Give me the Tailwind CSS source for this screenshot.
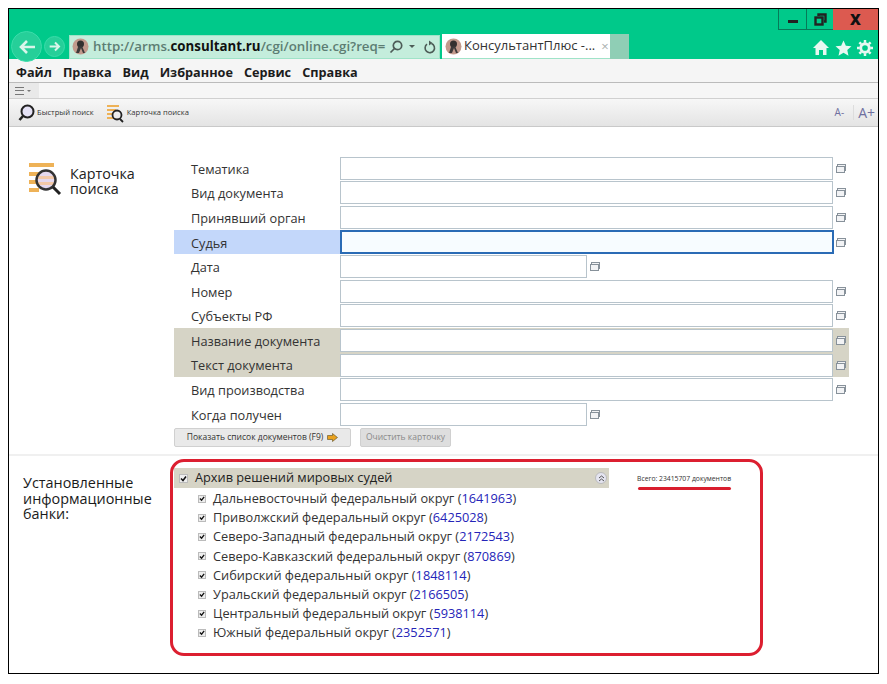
<!DOCTYPE html>
<html lang="ru">
<head>
  <meta charset="UTF-8">
  <title>КонсультантПлюс</title>
  <script src="https://cdn.jsdelivr.net/npm/@tailwindcss/browser@4"></script>
</head>
<body class="bg-white overflow-hidden font-['Open_Sans','Noto_Sans',sans-serif] text-[#222]">
  <div class="relative ml-[8px] mt-[8px] w-[871px] h-[666px] border border-black flex flex-col">

    <!-- title bar -->
    <div class="relative h-[50px] bg-[#00c98a] shrink-0">
      <div class="absolute right-0 top-0 flex h-[21px]">
        <div class="w-[28px] border-l border-b border-[#067a58] flex items-center justify-center"><div class="w-[10px] h-[3px] bg-[#222] mt-[4px]"></div></div>
        <div class="w-[27px] border-l border-b border-[#067a58] flex items-center justify-center">
          <svg width="13" height="13" viewBox="0 0 13 13" fill="none" stroke="#222" stroke-width="2.400"><rect x="1.500" y="4.500" width="7" height="7"/><path d="M4.500 3V1.500h7v7H10"/></svg>
        </div>
        <div class="w-[45px] bg-[#dc5a50] flex items-center justify-center text-[15px] font-extrabold text-[#111] leading-none">X</div>
      </div>
      <div class="absolute left-0 top-[25px] h-[25px] flex items-center pl-[2px]">
        <div class="w-[31px] h-[31px] rounded-full border border-[#3bdcaa] bg-[#26cf99] flex items-center justify-center">
          <svg width="18" height="16" viewBox="0 0 18 16" fill="none" stroke="#d9f5ea" stroke-width="2.600"><path d="M17 8H3M9 2 3 8l6 6"/></svg>
        </div>
        <div class="ml-[2px] w-[21px] h-[21px] rounded-full border border-[#3bdcaa] bg-[#26cf99] flex items-center justify-center">
          <svg width="12" height="11" viewBox="0 0 18 16" fill="none" stroke="#d9f5ea" stroke-width="3"><path d="M1 8h14M9 2l6 6-6 6"/></svg>
        </div>
        <div class="w-[371px] h-[24px] bg-[#c4eddc] flex items-center ml-[4px] pl-[2px] border border-[#9fe3c8]">
          <svg class="shrink-0" width="17" height="17" viewBox="0 0 17 17"><circle cx="8.500" cy="8.500" r="8" fill="#c29a8c"/><circle cx="8.500" cy="6" r="3.500" fill="#33302f"/><path d="M6 9l-2 6h3l2-5 2 5h2L10 8z" fill="#3c3a3a"/></svg>
          <span class="ml-[4px] w-[296px] overflow-hidden text-[13.300px] font-semibold text-[#5d7d73] whitespace-nowrap">http://arms.<b class="font-bold text-[#111]">consultant.ru</b>/cgi/online.cgi?req=</span>
          <svg class="ml-auto shrink-0" width="14" height="14" viewBox="0 0 14 14" fill="none" stroke="#4d5c57" stroke-width="1.700"><circle cx="8.500" cy="5.500" r="4.200"/><path d="M5.500 8.500 1.500 12.500"/></svg>
          <div class="ml-[6px] w-0 h-0 border-x-[3px] border-x-transparent border-t-[3px] border-t-[#4d5c57]"></div>
          <svg class="ml-[8px] mr-[3px] shrink-0" width="13" height="14" viewBox="0 0 13 14" fill="none" stroke="#4d5c57" stroke-width="1.600"><path d="M4 4.200a4.700 4.700 0 1 0 4.500-.6"/><path d="M6 0.500v5l3.500-2.500z" fill="#4d5c57" stroke="none"/></svg>
        </div>
        <div class="w-[168px] h-[25px] bg-white ml-[2px] flex items-center pl-[3px] border-b border-[#9fe3c8]">
          <svg class="shrink-0" width="17" height="17" viewBox="0 0 17 17"><circle cx="8.500" cy="8.500" r="8" fill="#c29a8c"/><circle cx="8.500" cy="6" r="3.500" fill="#33302f"/><path d="M6 9l-2 6h3l2-5 2 5h2L10 8z" fill="#3c3a3a"/></svg>
          <span class="ml-[2px] text-[13px] text-[#333] whitespace-nowrap">КонсультантПлюс -...</span>
          <span class="ml-[6px] text-[13px] leading-none text-[#a9b0ae]">×</span>
        </div>
        <div class="w-[19px] h-[25px] bg-[#8fceb5]"></div>
      </div>
      <div class="absolute right-[5px] top-[30px] flex items-center gap-[5px]">
        <svg width="18" height="17" viewBox="0 0 18 17" fill="#e8f8f2"><path d="M9 1 1 9h2.500v7H7v-5h4v5h3.500V9H17z"/></svg>
        <svg width="17" height="16" viewBox="0 0 18 17" fill="#e8f8f2"><path d="m9 .5 2.500 5.600 6 .6-4.500 4 1.300 6L9 13.600 3.700 16.700l1.300-6-4.500-4 6-.6z"/></svg>
        <svg width="16" height="16" viewBox="0 0 17 17" fill="none" stroke="#e8f8f2"><circle cx="8.500" cy="8.500" r="4.500" stroke-width="3"/><path d="M8.500 0v3M8.500 14v3M0 8.500h3M14 8.500h3M2.500 2.500l2 2M12.500 12.500l2 2M14.500 2.500l-2 2M4.500 12.500l-2 2" stroke-width="2.600"/></svg>
      </div>
    </div>

    <!-- menu bar -->
    <div class="h-[24px] pt-[4px] bg-[#f5f5f5] border-b border-[#bbb] shrink-0 flex items-center pl-[7px] gap-[11px] text-[12.700px] font-bold text-[#1c1c1c]">
      <span>Файл</span><span>Правка</span><span>Вид</span><span>Избранное</span><span>Сервис</span><span>Справка</span>
    </div>

    <!-- collapsed toolbar -->
    <div class="h-[16px] bg-[#f6f6f6] border-b border-[#d0d0d0] shrink-0 flex">
      <div class="w-[30px] bg-[#e9e9e9] flex items-center pl-[6px] gap-[3px]">
        <div class="w-[9px] h-[8px] border-y border-[#777] flex items-center"><div class="w-full h-px bg-[#777]"></div></div>
        <div class="w-0 h-0 border-x-[2px] border-x-transparent border-t-[2px] border-t-[#777]"></div>
      </div>
    </div>

    <!-- tools -->
    <div class="h-[28px] bg-gradient-to-b from-[#f7f7f7] to-[#e4e4e4] border-b border-[#c9c9c9] shrink-0 flex items-center pl-[9px] text-[7.600px] text-[#333]">
      <svg width="17" height="18" viewBox="0 0 17 18" fill="#e5e2f5" stroke="#222" stroke-width="2"><circle cx="9.500" cy="7.500" r="6"/><path d="M5 12 1.500 16" stroke-width="2.600"/></svg>
      <span class="ml-[2px]">Быстрый поиск</span>
      <svg class="ml-[12px]" width="20" height="20" viewBox="0 0 20 20"><path d="M1 2h12v2H1zM1 6h9v2H1zM1 10h6v2H1zM1 14h7v2H1z" fill="#eeb257"/><circle cx="11" cy="12" r="4.500" fill="none" stroke="#222" stroke-width="1.800"/><path d="m14 16 3 3" stroke="#222" stroke-width="1.800"/></svg>
      <span class="ml-[1px]">Карточка поиска</span>
      <div class="ml-auto flex items-center pr-[3px] text-[#6f6f9f]">
        <span class="text-[10px] pr-[9px] border-r border-[#ddd]">A-</span>
        <span class="text-[14px] pl-[4px]">A+</span>
      </div>
    </div>

    <!-- search card -->
    <div class="h-[329px] shrink-0 flex border-b-2 border-[#f0f0f0]">
      <div class="w-[165px] pl-[20px] pt-[36px] flex items-start shrink-0">
        <svg class="shrink-0" width="34" height="34" viewBox="0 0 34 34"><path d="M0 0h25v4H0zM0 9h10v4H0zM0 17h8v4H0zM0 25h10v4H0z" fill="#eeb257"/><circle cx="17" cy="17" r="9.500" fill="#e5d9ef"/><path d="M9 13h16v3H9zM9 19h16v3H9z" fill="#f3c9a8"/><circle cx="17" cy="17" r="9.500" fill="none" stroke="#333" stroke-width="2.500"/><path d="m24 24 7 7" stroke="#222" stroke-width="3"/></svg>
        <div class="ml-[7px] text-[14.300px] leading-[15px] mt-[3px] text-[#222]">Карточка<br>поиска</div>
      </div>

      <div class="w-[690px] pt-[29px] shrink-0 text-[12.750px] text-[#333]">
        <div class="h-[24.600px] flex items-center"><span class="w-[166px] pl-[17px] pt-[2px]">Тематика</span><div class="w-[493px] h-[23px] border border-[#b8c4cc] bg-white"></div><svg class="ml-[3px]" width="10" height="9" viewBox="0 0 10 9" fill="#f2f3f5" stroke="#87919a"><rect x="1.500" y=".5" width="8" height="6"/><rect x=".5" y="2.500" width="8" height="6"/></svg></div>
        <div class="h-[24.600px] flex items-center"><span class="w-[166px] pl-[17px] pt-[2px]">Вид документа</span><div class="w-[493px] h-[23px] border border-[#b8c4cc] bg-white"></div><svg class="ml-[3px]" width="10" height="9" viewBox="0 0 10 9" fill="#f2f3f5" stroke="#87919a"><rect x="1.500" y=".5" width="8" height="6"/><rect x=".5" y="2.500" width="8" height="6"/></svg></div>
        <div class="h-[24.600px] flex items-center"><span class="w-[166px] pl-[17px] pt-[2px]">Принявший орган</span><div class="w-[493px] h-[23px] border border-[#b8c4cc] bg-white"></div><svg class="ml-[3px]" width="10" height="9" viewBox="0 0 10 9" fill="#f2f3f5" stroke="#87919a"><rect x="1.500" y=".5" width="8" height="6"/><rect x=".5" y="2.500" width="8" height="6"/></svg></div>
        <div class="h-[24.600px] flex items-center"><span class="w-[166px] h-full flex items-center pl-[17px] pt-[2px] bg-[#c3d7fa]">Судья</span><div class="w-[494px] h-[24px] border-2 border-[#2a6bb5] bg-[#f7fcff]"></div><svg class="ml-[2px]" width="10" height="9" viewBox="0 0 10 9" fill="#f2f3f5" stroke="#87919a"><rect x="1.500" y=".5" width="8" height="6"/><rect x=".5" y="2.500" width="8" height="6"/></svg></div>
        <div class="h-[24.600px] flex items-center"><span class="w-[166px] pl-[17px] pt-[2px]">Дата</span><div class="w-[247px] h-[23px] border border-[#b8c4cc] bg-white"></div><svg class="ml-[3px]" width="10" height="9" viewBox="0 0 10 9" fill="#f2f3f5" stroke="#87919a"><rect x="1.500" y=".5" width="8" height="6"/><rect x=".5" y="2.500" width="8" height="6"/></svg></div>
        <div class="h-[24.600px] flex items-center"><span class="w-[166px] pl-[17px] pt-[2px]">Номер</span><div class="w-[493px] h-[23px] border border-[#b8c4cc] bg-white"></div><svg class="ml-[3px]" width="10" height="9" viewBox="0 0 10 9" fill="#f2f3f5" stroke="#87919a"><rect x="1.500" y=".5" width="8" height="6"/><rect x=".5" y="2.500" width="8" height="6"/></svg></div>
        <div class="h-[24.600px] flex items-center"><span class="w-[166px] pl-[17px] pt-[2px]">Субъекты РФ</span><div class="w-[493px] h-[23px] border border-[#b8c4cc] bg-white"></div><svg class="ml-[3px]" width="10" height="9" viewBox="0 0 10 9" fill="#f2f3f5" stroke="#87919a"><rect x="1.500" y=".5" width="8" height="6"/><rect x=".5" y="2.500" width="8" height="6"/></svg></div>
        <div class="bg-[#d6d4c6] w-[675px]">
          <div class="h-[24.600px] flex items-center"><span class="w-[166px] pl-[17px] pt-[2px]">Название документа</span><div class="w-[493px] h-[23px] border border-[#b8c4cc] bg-white"></div><svg class="ml-[3px]" width="10" height="9" viewBox="0 0 10 9" fill="#f2f3f5" stroke="#87919a"><rect x="1.500" y=".5" width="8" height="6"/><rect x=".5" y="2.500" width="8" height="6"/></svg></div>
          <div class="h-[24.600px] flex items-center"><span class="w-[166px] pl-[17px] pt-[2px]">Текст документа</span><div class="w-[493px] h-[23px] border border-[#b8c4cc] bg-white"></div><svg class="ml-[3px]" width="10" height="9" viewBox="0 0 10 9" fill="#f2f3f5" stroke="#87919a"><rect x="1.500" y=".5" width="8" height="6"/><rect x=".5" y="2.500" width="8" height="6"/></svg></div>
        </div>
        <div class="h-[24.600px] flex items-center"><span class="w-[166px] pl-[17px] pt-[2px]">Вид производства</span><div class="w-[493px] h-[23px] border border-[#b8c4cc] bg-white"></div><svg class="ml-[3px]" width="10" height="9" viewBox="0 0 10 9" fill="#f2f3f5" stroke="#87919a"><rect x="1.500" y=".5" width="8" height="6"/><rect x=".5" y="2.500" width="8" height="6"/></svg></div>
        <div class="h-[24.600px] flex items-center"><span class="w-[166px] pl-[17px] pt-[2px]">Когда получен</span><div class="w-[247px] h-[23px] border border-[#b8c4cc] bg-white"></div><svg class="ml-[3px]" width="10" height="9" viewBox="0 0 10 9" fill="#f2f3f5" stroke="#87919a"><rect x="1.500" y=".5" width="8" height="6"/><rect x=".5" y="2.500" width="8" height="6"/></svg></div>
        <div class="flex gap-[9px] text-[8.500px] mt-[1px]">
          <div class="w-[177px] h-[19px] bg-[#e9e9e9] border border-[#d0d0d0] rounded-[2px] flex items-center justify-center text-[#333]">Показать список документов (F9)
            <svg class="ml-[4px]" width="11" height="9" viewBox="0 0 11 9" fill="#e9a21f" stroke="#5a4a20" stroke-width=".6"><path d="M.5 2.500h5V.5l5 4-5 4v-2h-5z"/></svg>
          </div>
          <div class="w-[91px] h-[19px] bg-[#dedede] border border-[#d0d0d0] rounded-[2px] flex items-center justify-center text-[#8a8a8a]">Очистить карточку</div>
        </div>
      </div>
    </div>

    <!-- information banks -->
    <div class="relative flex-1 flex">
      <div class="w-[165px] pl-[14px] pt-[19px] text-[14.400px] leading-[15.500px] text-[#1a1a1a] shrink-0">Установленные<br>информационные<br>банки:</div>
      <div class="w-[435px] pt-[12px] text-[12.750px] text-[#333]">
        <div class="h-[20px] bg-[#d6d4c6] flex items-center pl-[5px]">
          <span class="w-[9px] h-[9px] bg-[#eee] border border-[#bbb] flex items-center justify-center shrink-0"><svg width="7" height="7" viewBox="0 0 7 7" fill="none" stroke="#111" stroke-width="1.500"><path d="m1 3.500 2 2 3-4"/></svg></span>
          <span class="ml-[7px] text-[#222]">Архив решений мировых судей</span>
          <span class="ml-auto mr-[2px] w-[12px] h-[12px] rounded-full bg-[#e4e4f0] border border-[#bbb] flex items-center justify-center"><svg width="7" height="7" viewBox="0 0 7 7" fill="none" stroke="#555"><path d="m1 3 2.500-2L6 3M1 6l2.500-2L6 6"/></svg></span>
        </div>
        <div class="pl-[24px] pt-[1px]">
          <div class="h-[19.200px] flex items-center"><span class="w-[8px] h-[8px] bg-[#eee] border border-[#bbb] flex items-center justify-center shrink-0"><svg width="7" height="7" viewBox="0 0 7 7" fill="none" stroke="#111" stroke-width="1.500"><path d="m1 3.500 2 2 3-4"/></svg></span><span class="ml-[7px]">Дальневосточный федеральный округ (<span class="text-[#2424b8]">1641963</span>)</span></div>
          <div class="h-[19.200px] flex items-center"><span class="w-[8px] h-[8px] bg-[#eee] border border-[#bbb] flex items-center justify-center shrink-0"><svg width="7" height="7" viewBox="0 0 7 7" fill="none" stroke="#111" stroke-width="1.500"><path d="m1 3.500 2 2 3-4"/></svg></span><span class="ml-[7px]">Приволжский федеральный округ (<span class="text-[#2424b8]">6425028</span>)</span></div>
          <div class="h-[19.200px] flex items-center"><span class="w-[8px] h-[8px] bg-[#eee] border border-[#bbb] flex items-center justify-center shrink-0"><svg width="7" height="7" viewBox="0 0 7 7" fill="none" stroke="#111" stroke-width="1.500"><path d="m1 3.500 2 2 3-4"/></svg></span><span class="ml-[7px]">Северо-Западный федеральный округ (<span class="text-[#2424b8]">2172543</span>)</span></div>
          <div class="h-[19.200px] flex items-center"><span class="w-[8px] h-[8px] bg-[#eee] border border-[#bbb] flex items-center justify-center shrink-0"><svg width="7" height="7" viewBox="0 0 7 7" fill="none" stroke="#111" stroke-width="1.500"><path d="m1 3.500 2 2 3-4"/></svg></span><span class="ml-[7px]">Северо-Кавказский федеральный округ (<span class="text-[#2424b8]">870869</span>)</span></div>
          <div class="h-[19.200px] flex items-center"><span class="w-[8px] h-[8px] bg-[#eee] border border-[#bbb] flex items-center justify-center shrink-0"><svg width="7" height="7" viewBox="0 0 7 7" fill="none" stroke="#111" stroke-width="1.500"><path d="m1 3.500 2 2 3-4"/></svg></span><span class="ml-[7px]">Сибирский федеральный округ (<span class="text-[#2424b8]">1848114</span>)</span></div>
          <div class="h-[19.200px] flex items-center"><span class="w-[8px] h-[8px] bg-[#eee] border border-[#bbb] flex items-center justify-center shrink-0"><svg width="7" height="7" viewBox="0 0 7 7" fill="none" stroke="#111" stroke-width="1.500"><path d="m1 3.500 2 2 3-4"/></svg></span><span class="ml-[7px]">Уральский федеральный округ (<span class="text-[#2424b8]">2166505</span>)</span></div>
          <div class="h-[19.200px] flex items-center"><span class="w-[8px] h-[8px] bg-[#eee] border border-[#bbb] flex items-center justify-center shrink-0"><svg width="7" height="7" viewBox="0 0 7 7" fill="none" stroke="#111" stroke-width="1.500"><path d="m1 3.500 2 2 3-4"/></svg></span><span class="ml-[7px]">Центральный федеральный округ (<span class="text-[#2424b8]">5938114</span>)</span></div>
          <div class="h-[19.200px] flex items-center"><span class="w-[8px] h-[8px] bg-[#eee] border border-[#bbb] flex items-center justify-center shrink-0"><svg width="7" height="7" viewBox="0 0 7 7" fill="none" stroke="#111" stroke-width="1.500"><path d="m1 3.500 2 2 3-4"/></svg></span><span class="ml-[7px]">Южный федеральный округ (<span class="text-[#2424b8]">2352571</span>)</span></div>
        </div>
      </div>
      <div class="ml-[28px] pt-[18px] text-[6.800px] text-[#333]">
        <div class="whitespace-nowrap">Всего: 23415707 документов</div>
        <div class="mt-[3px] ml-[1px] h-[3px] w-[93px] rounded-full bg-[#d91e2e]"></div>
      </div>
      <!-- red annotation -->
      <div class="absolute left-[161px] top-[3px] w-[593px] h-[197px] border-[3px] border-[#dc1f30] rounded-[14px] pointer-events-none"></div>
    </div>
  </div>
</body>
</html>
